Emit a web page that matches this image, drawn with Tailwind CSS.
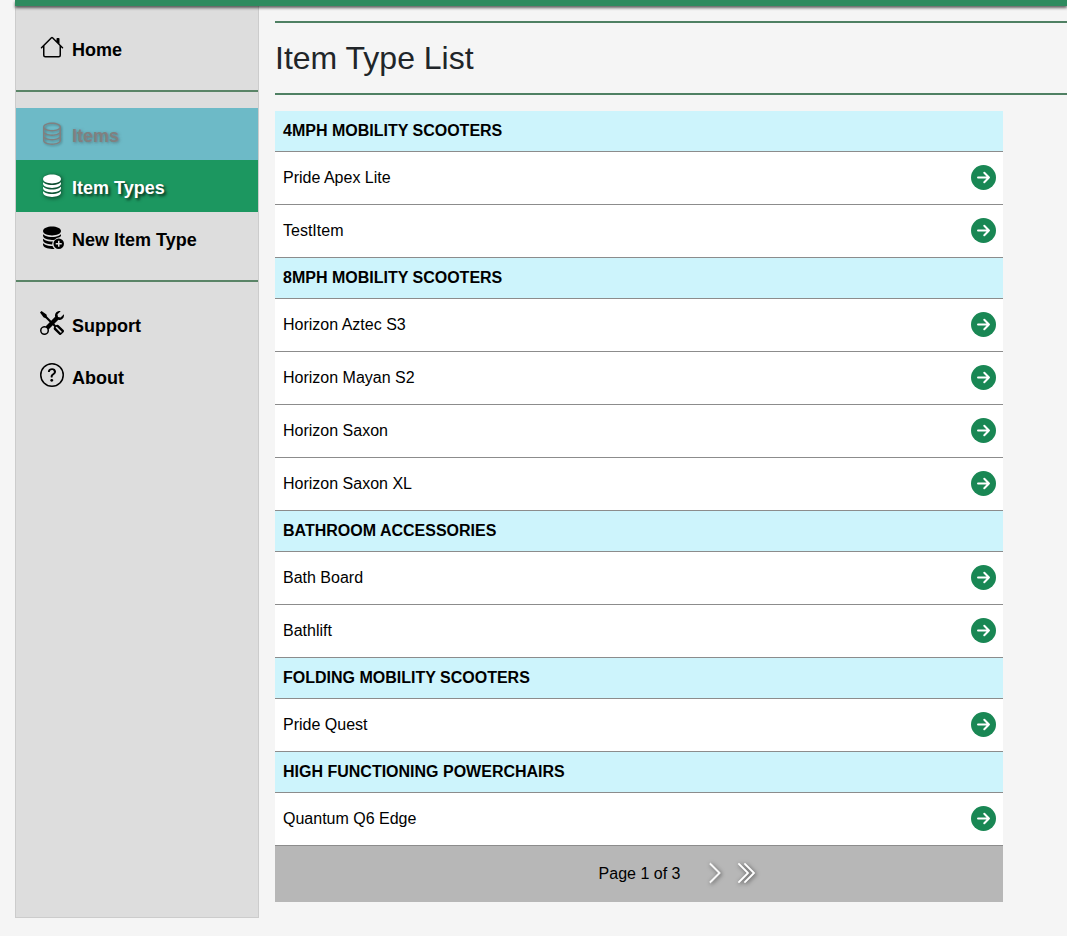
<!DOCTYPE html>
<html>
<head>
<meta charset="utf-8">
<script src="https://cdn.jsdelivr.net/npm/@tailwindcss/browser@4"></script>
</head>
<body class="bg-[#f5f5f5] font-['Liberation_Sans',Arial,sans-serif] text-black">
<div class="w-[1067px] h-[936px] overflow-hidden pl-[15px]">
  <div class="h-[6px] bg-[#2e8b5f] shadow-[0_2px_3px_rgba(0,0,0,0.6)] relative"></div>
  <div class="flex items-start">
    <aside class="w-[244px] h-[912px] shrink-0 bg-[#dddddd] border border-t-0 border-[#cccccc] flex flex-col">
      <a class="h-[52px] mt-[17px] flex items-center pl-[24px] gap-[8px] text-[18px] font-bold">
        <svg class="w-6 h-6 -mt-1" viewBox="0 0 16 16" fill="currentColor"><path d="M8.707 1.5a1 1 0 0 0-1.414 0L.646 8.146a.5.5 0 0 0 .708.708L2 8.207V13.5A1.5 1.5 0 0 0 3.5 15h9a1.5 1.5 0 0 0 1.5-1.5V8.207l.646.647a.5.5 0 0 0 .708-.708L13 5.793V2.5a.5.5 0 0 0-.5-.5h-1a.5.5 0 0 0-.5.5v1.293L8.707 1.5ZM13 7.207V13.5a.5.5 0 0 1-.5.5h-9a.5.5 0 0 1-.5-.5V7.207l5-5 5 5Z"/></svg>
        <span class="pt-[2px]">Home</span>
      </a>
      <div class="h-[2px] mt-[15px] bg-[#5a8467]"></div>
      <a class="h-[52px] mt-[16px] flex items-center pl-[24px] gap-[8px] text-[18px] font-bold bg-[#6dbac7] text-[#808080] [text-shadow:1px_1px_3px_rgba(70,70,70,0.5)]">
        <svg class="w-6 h-6 -mt-[2px] drop-shadow-[1px_1px_1px_rgba(0,0,0,0.3)]" viewBox="0 0 16 16" fill="currentColor"><path d="M4.318 2.687C5.234 2.271 6.536 2 8 2s2.766.27 3.682.687C12.644 3.125 13 3.627 13 4c0 .374-.356.875-1.318 1.313C10.766 5.729 9.464 6 8 6s-2.766-.27-3.682-.687C3.356 4.875 3 4.373 3 4c0-.374.356-.875 1.318-1.313ZM13 5.698V7c0 .374-.356.875-1.318 1.313C10.766 8.729 9.464 9 8 9s-2.766-.27-3.682-.687C3.356 7.875 3 7.373 3 7V5.698c.271.202.58.378.904.525C4.978 6.711 6.427 7 8 7s3.022-.289 4.096-.777A4.92 4.92 0 0 0 13 5.698ZM14 4c0-1.007-.875-1.755-1.904-2.223C11.022 1.289 9.573 1 8 1s-3.022.289-4.096.777C2.875 2.245 2 2.993 2 4v9c0 1.007.875 1.755 1.904 2.223C4.978 15.71 6.427 16 8 16s3.022-.289 4.096-.777C13.125 14.755 14 14.007 14 13V4Zm-1 4.698V10c0 .374-.356.875-1.318 1.313C10.766 11.729 9.464 12 8 12s-2.766-.27-3.682-.687C3.356 10.875 3 10.373 3 10V8.698c.271.202.58.378.904.525C4.978 9.71 6.427 10 8 10s3.022-.289 4.096-.777A4.92 4.92 0 0 0 13 8.698Zm0 3V13c0 .374-.356.875-1.318 1.313C10.766 14.729 9.464 15 8 15s-2.766-.27-3.682-.687C3.356 13.875 3 13.373 3 13v-1.302c.271.202.58.378.904.525C4.978 12.71 6.427 13 8 13s3.022-.289 4.096-.777c.324-.147.633-.323.904-.525Z"/></svg>
        <span class="pt-[4px]">Items</span>
      </a>
      <a class="h-[52px] flex items-center pl-[24px] gap-[8px] text-[18px] font-bold bg-[#1c9760] text-white [text-shadow:2px_2px_3px_rgba(0,0,0,0.7)]">
        <svg class="w-6 h-6 -mt-[2px] drop-shadow-[1px_1px_2px_rgba(0,0,0,0.7)]" viewBox="0 0 16 16" fill="currentColor"><path d="M3.904 1.777C4.978 1.289 6.427 1 8 1s3.022.289 4.096.777C13.125 2.245 14 2.993 14 4s-.875 1.755-1.904 2.223C11.022 6.711 9.573 7 8 7s-3.022-.289-4.096-.777C2.875 5.755 2 5.007 2 4s.875-1.755 1.904-2.223Z"/><path d="M2 6.161V7c0 1.007.875 1.755 1.904 2.223C4.978 9.71 6.427 10 8 10s3.022-.289 4.096-.777C13.125 8.755 14 8.007 14 7v-.839c-.457.432-1.004.751-1.49.972C11.278 7.693 9.682 8 8 8s-3.278-.307-4.51-.867c-.486-.22-1.033-.54-1.49-.972Z"/><path d="M2 9.161V10c0 1.007.875 1.755 1.904 2.223C4.978 12.711 6.427 13 8 13s3.022-.289 4.096-.777C13.125 11.755 14 11.007 14 10v-.839c-.457.432-1.004.751-1.49.972-1.232.56-2.828.867-4.51.867s-3.278-.307-4.51-.867c-.486-.22-1.033-.54-1.49-.972Z"/><path d="M2 12.161V13c0 1.007.875 1.755 1.904 2.223C4.978 15.711 6.427 16 8 16s3.022-.289 4.096-.777C13.125 14.755 14 14.007 14 13v-.839c-.457.432-1.004.751-1.49.972-1.232.56-2.828.867-4.51.867s-3.278-.307-4.51-.867c-.486-.22-1.033-.54-1.49-.972Z"/></svg>
        <span class="pt-[4px]">Item Types</span>
      </a>
      <a class="h-[52px] flex items-center pl-[24px] gap-[8px] text-[18px] font-bold">
        <svg class="w-6 h-6 -mt-[2px]" viewBox="0 0 16 16" fill="currentColor"><path d="M3.904 1.777C4.978 1.289 6.427 1 8 1s3.022.289 4.096.777C13.125 2.245 14 2.993 14 4s-.875 1.755-1.904 2.223C11.022 6.711 9.573 7 8 7s-3.022-.289-4.096-.777C2.875 5.755 2 5.007 2 4s.875-1.755 1.904-2.223Z"/><path d="M2 6.161V7c0 1.007.875 1.755 1.904 2.223C4.978 9.71 6.427 10 8 10c.6 0 1.2-.04 1.76-.12A4.5 4.5 0 0 1 13 8.1c.6-.3 1-.65 1-1.1v-.839c-.457.432-1.004.751-1.49.972C11.278 7.693 9.682 8 8 8s-3.278-.307-4.51-.867c-.486-.22-1.033-.54-1.49-.972Z"/><path d="M2 9.161V10c0 1.007.875 1.755 1.904 2.223C4.978 12.711 6.427 13 8 13h.1a4.5 4.5 0 0 1 .5-2.03c-.2.02-.4.03-.6.03-1.682 0-3.278-.307-4.51-.867-.486-.22-1.033-.54-1.49-.972Z"/><path d="M2 12.161V13c0 1.007.875 1.755 1.904 2.223C4.978 15.711 6.427 16 8 16c.6 0 1.2-.04 1.7-.12a4.5 4.5 0 0 1-1.4-1.9c-.1 0-.2 0-.3 0-1.682 0-3.278-.307-4.51-.867-.486-.22-1.033-.54-1.49-.972Z"/><path fill-rule="evenodd" d="M12.5 9a3.5 3.5 0 1 0 0 7 3.5 3.5 0 0 0 0-7Zm.5 1.5v1.5h1.5v1H13v1.5h-1V13h-1.5v-1H12v-1.5h1Z"/></svg>
        <span class="pt-[4px]">New Item Type</span>
      </a>
      <div class="h-[2px] mt-[16px] bg-[#5a8467]"></div>
      <a class="h-[52px] mt-[18px] flex items-center pl-[24px] gap-[8px] text-[18px] font-bold">
        <svg class="w-6 h-6 -mt-[6px]" viewBox="0 0 16 16" fill="currentColor"><path d="M1 0 0 1l2.2 3.081a1 1 0 0 0 .815.419h.07a1 1 0 0 1 .708.293l2.675 2.675-2.617 2.654A3.003 3.003 0 0 0 0 13a3 3 0 1 0 5.878-.851l2.654-2.617.968.968-.305.914a1 1 0 0 0 .242 1.023l3.27 3.27a.997.997 0 0 0 1.414 0l1.586-1.586a.997.997 0 0 0 0-1.414l-3.27-3.27a1 1 0 0 0-1.023-.242L10.5 9.5l-.96-.96 2.68-2.643A3.005 3.005 0 0 0 16 3c0-.269-.035-.53-.102-.777l-2.14 2.141L12 4l-.364-1.757L13.777.102a3 3 0 0 0-3.675 3.68L7.462 6.46 4.793 3.793a1 1 0 0 1-.293-.707v-.071a1 1 0 0 0-.419-.814L1 0Zm9.646 10.646a.5.5 0 0 1 .708 0l2.914 2.915a.5.5 0 0 1-.707.707l-2.915-2.914a.5.5 0 0 1 0-.708ZM3 11a2 2 0 1 1 0 4 2 2 0 0 1 0-4Z"/></svg>
        <span>Support</span>
      </a>
      <a class="h-[52px] flex items-center pl-[24px] gap-[8px] text-[18px] font-bold">
        <svg class="w-6 h-6 -mt-[6px]" viewBox="0 0 16 16" fill="currentColor"><path d="M8 15A7 7 0 1 1 8 1a7 7 0 0 1 0 14zm0 1A8 8 0 1 0 8 0a8 8 0 0 0 0 16z"/><path d="M5.255 5.786a.237.237 0 0 0 .241.247h.825c.138 0 .248-.113.266-.25.09-.656.54-1.134 1.342-1.134.686 0 1.314.343 1.314 1.168 0 .635-.374.927-.965 1.371-.673.489-1.206 1.06-1.168 1.987l.003.217a.25.25 0 0 0 .25.246h.811a.25.25 0 0 0 .25-.25v-.105c0-.718.273-.927 1.01-1.486.609-.463 1.244-.977 1.244-2.056 0-1.511-1.276-2.241-2.673-2.241-1.267 0-2.655.59-2.75 2.286zm1.557 5.763c0 .533.425.927 1.01.927.609 0 1.028-.394 1.028-.927 0-.552-.42-.94-1.029-.94-.584 0-1.009.388-1.009.94z"/></svg>
        <span>About</span>
      </a>
    </aside>
    <main class="ml-[16px] flex-1 min-w-0">
      <div class="mt-[15px] h-[74px] border-y-2 border-[#4f8063] flex items-center">
        <h1 class="text-[32px] leading-[38px] text-[#212529]">Item Type List</h1>
      </div>
      <div class="mt-[16px] w-[728px] text-[16px]">
        <div class="h-[41px] bg-[#cdf4fc] border-b border-[#8c8c8c] flex items-center pl-2 font-bold">4MPH MOBILITY SCOOTERS</div>
        <div class="h-[53px] bg-white border-b border-[#8c8c8c] flex items-center justify-between px-2 pr-[7px]"><span>Pride Apex Lite</span><svg class="w-[25px] h-[25px] -mt-[2px] text-[#198754]" viewBox="0 0 16 16" fill="currentColor"><circle cx="8" cy="8" r="8"/><path d="M4.5 8h7M8.5 5l3 3-3 3" fill="none" stroke="#fff" stroke-width="1.3" stroke-linecap="round" stroke-linejoin="round"/></svg></div>
        <div class="h-[53px] bg-white border-b border-[#8c8c8c] flex items-center justify-between px-2 pr-[7px]"><span>TestItem</span><svg class="w-[25px] h-[25px] -mt-[2px] text-[#198754]" viewBox="0 0 16 16" fill="currentColor"><circle cx="8" cy="8" r="8"/><path d="M4.5 8h7M8.5 5l3 3-3 3" fill="none" stroke="#fff" stroke-width="1.3" stroke-linecap="round" stroke-linejoin="round"/></svg></div>
        <div class="h-[41px] bg-[#cdf4fc] border-b border-[#8c8c8c] flex items-center pl-2 font-bold">8MPH MOBILITY SCOOTERS</div>
        <div class="h-[53px] bg-white border-b border-[#8c8c8c] flex items-center justify-between px-2 pr-[7px]"><span>Horizon Aztec S3</span><svg class="w-[25px] h-[25px] -mt-[2px] text-[#198754]" viewBox="0 0 16 16" fill="currentColor"><circle cx="8" cy="8" r="8"/><path d="M4.5 8h7M8.5 5l3 3-3 3" fill="none" stroke="#fff" stroke-width="1.3" stroke-linecap="round" stroke-linejoin="round"/></svg></div>
        <div class="h-[53px] bg-white border-b border-[#8c8c8c] flex items-center justify-between px-2 pr-[7px]"><span>Horizon Mayan S2</span><svg class="w-[25px] h-[25px] -mt-[2px] text-[#198754]" viewBox="0 0 16 16" fill="currentColor"><circle cx="8" cy="8" r="8"/><path d="M4.5 8h7M8.5 5l3 3-3 3" fill="none" stroke="#fff" stroke-width="1.3" stroke-linecap="round" stroke-linejoin="round"/></svg></div>
        <div class="h-[53px] bg-white border-b border-[#8c8c8c] flex items-center justify-between px-2 pr-[7px]"><span>Horizon Saxon</span><svg class="w-[25px] h-[25px] -mt-[2px] text-[#198754]" viewBox="0 0 16 16" fill="currentColor"><circle cx="8" cy="8" r="8"/><path d="M4.5 8h7M8.5 5l3 3-3 3" fill="none" stroke="#fff" stroke-width="1.3" stroke-linecap="round" stroke-linejoin="round"/></svg></div>
        <div class="h-[53px] bg-white border-b border-[#8c8c8c] flex items-center justify-between px-2 pr-[7px]"><span>Horizon Saxon XL</span><svg class="w-[25px] h-[25px] -mt-[2px] text-[#198754]" viewBox="0 0 16 16" fill="currentColor"><circle cx="8" cy="8" r="8"/><path d="M4.5 8h7M8.5 5l3 3-3 3" fill="none" stroke="#fff" stroke-width="1.3" stroke-linecap="round" stroke-linejoin="round"/></svg></div>
        <div class="h-[41px] bg-[#cdf4fc] border-b border-[#8c8c8c] flex items-center pl-2 font-bold">BATHROOM ACCESSORIES</div>
        <div class="h-[53px] bg-white border-b border-[#8c8c8c] flex items-center justify-between px-2 pr-[7px]"><span>Bath Board</span><svg class="w-[25px] h-[25px] -mt-[2px] text-[#198754]" viewBox="0 0 16 16" fill="currentColor"><circle cx="8" cy="8" r="8"/><path d="M4.5 8h7M8.5 5l3 3-3 3" fill="none" stroke="#fff" stroke-width="1.3" stroke-linecap="round" stroke-linejoin="round"/></svg></div>
        <div class="h-[53px] bg-white border-b border-[#8c8c8c] flex items-center justify-between px-2 pr-[7px]"><span>Bathlift</span><svg class="w-[25px] h-[25px] -mt-[2px] text-[#198754]" viewBox="0 0 16 16" fill="currentColor"><circle cx="8" cy="8" r="8"/><path d="M4.5 8h7M8.5 5l3 3-3 3" fill="none" stroke="#fff" stroke-width="1.3" stroke-linecap="round" stroke-linejoin="round"/></svg></div>
        <div class="h-[41px] bg-[#cdf4fc] border-b border-[#8c8c8c] flex items-center pl-2 font-bold">FOLDING MOBILITY SCOOTERS</div>
        <div class="h-[53px] bg-white border-b border-[#8c8c8c] flex items-center justify-between px-2 pr-[7px]"><span>Pride Quest</span><svg class="w-[25px] h-[25px] -mt-[2px] text-[#198754]" viewBox="0 0 16 16" fill="currentColor"><circle cx="8" cy="8" r="8"/><path d="M4.5 8h7M8.5 5l3 3-3 3" fill="none" stroke="#fff" stroke-width="1.3" stroke-linecap="round" stroke-linejoin="round"/></svg></div>
        <div class="h-[41px] bg-[#cdf4fc] border-b border-[#8c8c8c] flex items-center pl-2 font-bold">HIGH FUNCTIONING POWERCHAIRS</div>
        <div class="h-[53px] bg-white border-b border-[#8c8c8c] flex items-center justify-between px-2 pr-[7px]"><span>Quantum Q6 Edge</span><svg class="w-[25px] h-[25px] -mt-[2px] text-[#198754]" viewBox="0 0 16 16" fill="currentColor"><circle cx="8" cy="8" r="8"/><path d="M4.5 8h7M8.5 5l3 3-3 3" fill="none" stroke="#fff" stroke-width="1.3" stroke-linecap="round" stroke-linejoin="round"/></svg></div>
        <div class="h-[56px] bg-[#b7b7b7] flex items-center justify-center gap-[6px] pl-[78px]">
          <span class="mr-[17px]">Page 1 of 3</span>
          <svg class="w-6 h-6 -mt-[2px] text-white drop-shadow-[1px_1px_2px_rgba(0,0,0,0.6)]" viewBox="0 0 16 16" fill="currentColor" stroke="currentColor" stroke-width="0.4"><path d="M4.646 1.646a.5.5 0 0 1 .708 0l6 6a.5.5 0 0 1 0 .708l-6 6a.5.5 0 0 1-.708-.708L10.293 8 4.646 2.354a.5.5 0 0 1 0-.708z"/></svg>
          <svg class="w-6 h-6 -mt-[2px] text-white drop-shadow-[1px_1px_2px_rgba(0,0,0,0.6)]" viewBox="0 0 16 16" fill="currentColor" stroke="currentColor" stroke-width="0.4"><path d="M3.646 1.646a.5.5 0 0 1 .708 0l6 6a.5.5 0 0 1 0 .708l-6 6a.5.5 0 0 1-.708-.708L9.293 8 3.646 2.354a.5.5 0 0 1 0-.708z"/><path d="M7.646 1.646a.5.5 0 0 1 .708 0l6 6a.5.5 0 0 1 0 .708l-6 6a.5.5 0 0 1-.708-.708L13.293 8 7.646 2.354a.5.5 0 0 1 0-.708z"/></svg>
        </div>
      </div>
    </main>
  </div>
</div>
</body>
</html>
